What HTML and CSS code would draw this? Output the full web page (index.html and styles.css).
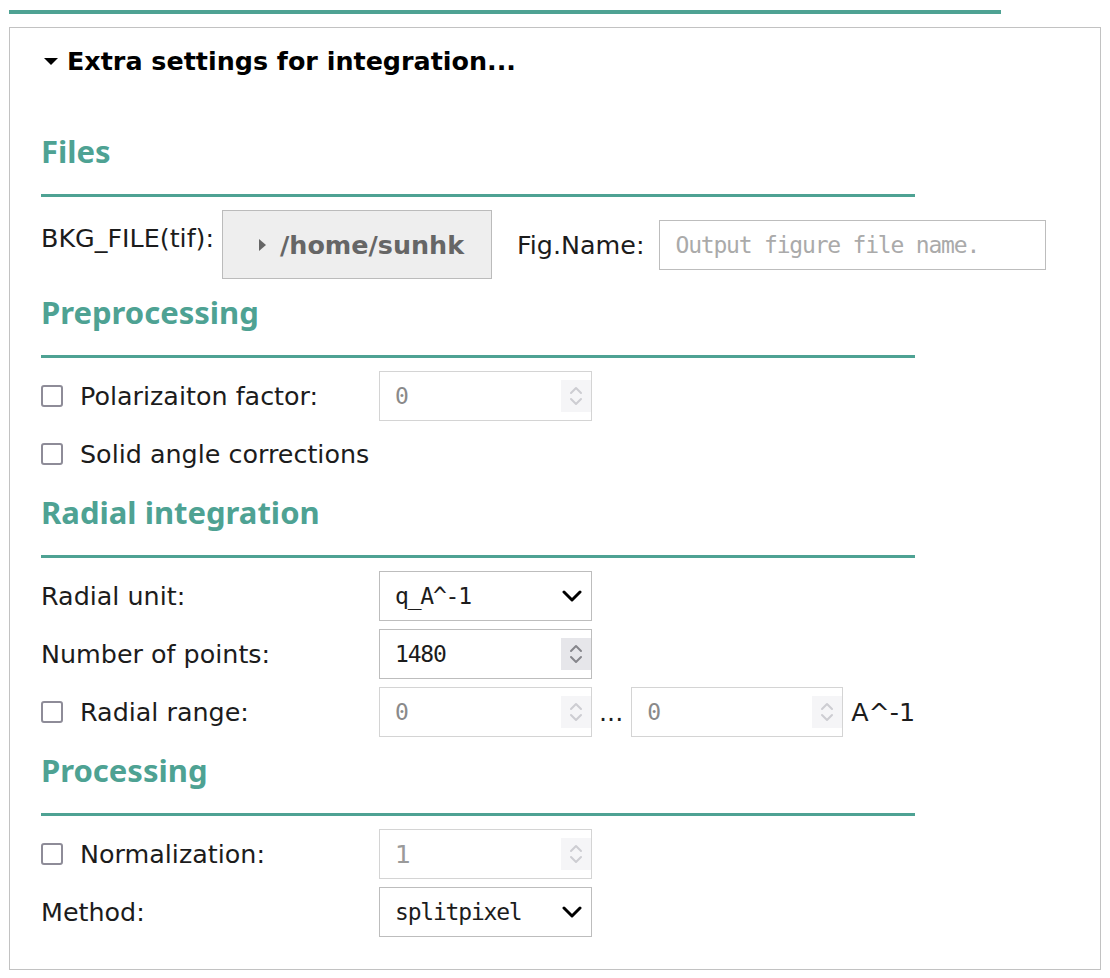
FILE: index.html
```html
<!DOCTYPE html>
<html lang="en">
<head>
<meta charset="utf-8">
<title>Extra settings for integration</title>
<link rel="stylesheet" href="styles.css">
</head>
<body>
<div class="page">
  <div class="top-line"></div>
  <details class="box" open>
    <summary class="sum"><span class="caret"></span>Extra settings for integration...</summary>
    <div class="content">
      <h3 class="sec">Files</h3>
      <div class="row-files">
        <span class="lab-top">BKG_FILE(tif):</span>
        <button class="file-btn" type="button"><span class="tri"></span>/home/sunhk</button>
        <label class="fig-lab" for="fig">Fig.Name:</label>
        <input id="fig" class="txt" type="text" placeholder="Output figure file name.">
      </div>

      <h3 class="sec">Preprocessing</h3>
      <div class="rows">
        <div class="row">
          <label class="lab"><input class="cb" type="checkbox">Polarizaiton factor:</label>
          <div class="num dis">
            <input type="text" value="0" disabled>
            <span class="spin"><svg viewBox="0 0 30 32" width="30" height="32"><polyline points="10,13 15,8 20,13"/><polyline points="10,19 15,24 20,19"/></svg></span>
          </div>
        </div>
        <div class="row">
          <label class="lab lab-wide"><input class="cb" type="checkbox">Solid angle corrections</label>
        </div>
      </div>

      <h3 class="sec">Radial integration</h3>
      <div class="rows">
        <div class="row">
          <span class="lab">Radial unit:</span>
          <div class="sel">
            <span class="sel-val">q_A^-1</span>
            <svg class="chev" viewBox="0 0 20 12" width="20" height="12"><polyline points="2,2 10,10 18,2"/></svg>
          </div>
        </div>
        <div class="row">
          <span class="lab">Number of points:</span>
          <div class="num">
            <input type="text" value="1480">
            <span class="spin"><svg viewBox="0 0 30 32" width="30" height="32"><polyline points="10,13 15,8 20,13"/><polyline points="10,19 15,24 20,19"/></svg></span>
          </div>
        </div>
        <div class="row">
          <label class="lab"><input class="cb" type="checkbox">Radial range:</label>
          <div class="num dis">
            <input type="text" value="0" disabled>
            <span class="spin"><svg viewBox="0 0 30 32" width="30" height="32"><polyline points="10,13 15,8 20,13"/><polyline points="10,19 15,24 20,19"/></svg></span>
          </div>
          <span class="dots">...</span>
          <div class="num dis num-b">
            <input type="text" value="0" disabled>
            <span class="spin"><svg viewBox="0 0 30 32" width="30" height="32"><polyline points="10,13 15,8 20,13"/><polyline points="10,19 15,24 20,19"/></svg></span>
          </div>
          <span class="unit">A^-1</span>
        </div>
      </div>

      <h3 class="sec">Processing</h3>
      <div class="rows">
        <div class="row">
          <label class="lab"><input class="cb" type="checkbox">Normalization:</label>
          <div class="num dis">
            <input class="sans" type="text" value="1" disabled>
            <span class="spin"><svg viewBox="0 0 30 32" width="30" height="32"><polyline points="10,13 15,8 20,13"/><polyline points="10,19 15,24 20,19"/></svg></span>
          </div>
        </div>
        <div class="row">
          <span class="lab">Method:</span>
          <div class="sel">
            <span class="sel-val">splitpixel</span>
            <svg class="chev" viewBox="0 0 20 12" width="20" height="12"><polyline points="2,2 10,10 18,2"/></svg>
          </div>
        </div>
      </div>
    </div>
  </details>
</div>
</body>
</html>
```

FILE: styles.css
```css
body {
  margin: 0;
  background: #fff;
  color: #1c1c1c;
  font-family: "DejaVu Sans", sans-serif;
  font-size: 25.4px;
}

.page {
  padding: 10px 0 0 9px;
}

.top-line {
  width: 992px;
  height: 4px;
  background: #4ea293;
  margin-bottom: 13px;
}

.box {
  width: 1092px;
  box-sizing: border-box;
  border: 1px solid #c2c2c2;
  padding: 18px 30px 32px 31px;
}

.sum {
  display: flex;
  align-items: center;
  height: 30px;
  line-height: 30px;
  list-style: none;
  font-weight: bold;
  color: #000;
  cursor: pointer;
}

.sum::-webkit-details-marker {
  display: none;
}

.caret {
  width: 0;
  height: 0;
  border-left: 7px solid transparent;
  border-right: 7px solid transparent;
  border-top: 7px solid #000;
  margin: 0 9px 0 3px;
}

.content {
  padding-top: 42px;
}

.sec {
  width: 874px;
  margin: 0 0 13px;
  padding: 14px 0 24px;
  line-height: 38px;
  font-family: "Noto Sans", sans-serif;
  font-size: 31px;
  font-weight: bold;
  color: #4ea293;
  border-bottom: 3px solid #4ea293;
}

.row-files {
  display: flex;
  align-items: center;
  height: 69px;
}

.lab-top {
  align-self: flex-start;
  line-height: 56px;
  margin-right: 8px;
  white-space: nowrap;
}

.file-btn {
  width: 270px;
  height: 69px;
  box-sizing: border-box;
  flex-shrink: 0;
  display: flex;
  align-items: center;
  gap: 14px;
  padding: 0 0 0 36px;
  margin: 0;
  background: #eeeeee;
  border: 1px solid #bbbbbb;
  border-radius: 0;
  font-family: "DejaVu Sans", sans-serif;
  font-size: 25.4px;
  font-weight: bold;
  color: #666;
}

.tri {
  width: 0;
  height: 0;
  border-top: 6px solid transparent;
  border-bottom: 6px solid transparent;
  border-left: 7px solid #666;
}

.fig-lab {
  margin: 0 14px 0 25px;
  white-space: nowrap;
}

.txt {
  width: 387px;
  height: 50px;
  box-sizing: border-box;
  flex-shrink: 0;
  margin: 0;
  border: 1px solid #bdbdbd;
  border-radius: 0;
  padding: 0 16px;
  outline: none;
  font-family: "DejaVu Sans Mono", monospace;
  font-size: 23px;
  letter-spacing: -1.2px;
  color: #1c1c1c;
}

.txt::placeholder {
  color: #aaaaaa;
}

.rows {
  display: flex;
  flex-direction: column;
  gap: 8px;
}

.row {
  display: flex;
  align-items: center;
  height: 50px;
}

.lab {
  width: 338px;
  flex-shrink: 0;
  display: flex;
  align-items: center;
  white-space: nowrap;
}

.lab-wide {
  width: auto;
}

.cb {
  appearance: none;
  -webkit-appearance: none;
  width: 22px;
  height: 22px;
  box-sizing: border-box;
  margin: 0 17px 0 0;
  border: 2px solid #8e8c98;
  border-radius: 3px;
  background: #fff;
}

.num,
.sel {
  width: 213px;
  height: 50px;
  box-sizing: border-box;
  flex-shrink: 0;
  display: flex;
  align-items: center;
  border: 1px solid #bdbdbd;
  background: #fff;
}

.num-b {
  width: 212px;
}

.num input {
  flex: 1;
  min-width: 0;
  height: 100%;
  margin: 0;
  padding: 0 0 0 15px;
  border: 0;
  outline: none;
  background: transparent;
  font-family: "DejaVu Sans Mono", monospace;
  font-size: 23px;
  letter-spacing: -1.2px;
  color: #1c1c1c;
}

.num input.sans {
  font-family: "DejaVu Sans", sans-serif;
  font-size: 25.4px;
  letter-spacing: 0;
}

.spin {
  width: 30px;
  height: 32px;
  flex-shrink: 0;
  background: #e6e6ea;
  display: flex;
}

.spin svg {
  fill: none;
  stroke: #86868c;
  stroke-width: 2;
  stroke-linecap: round;
  stroke-linejoin: round;
}

.num.dis {
  border-color: #d4d4d4;
}

.num.dis input {
  color: #8a8a8a;
  -webkit-text-fill-color: #8a8a8a;
}

.num.dis input.sans {
  color: #9a9a9a;
  -webkit-text-fill-color: #9a9a9a;
}

.num.dis .spin {
  background: #f5f5f7;
}

.num.dis .spin svg {
  stroke: #cdcdd2;
}

.sel-val {
  flex: 1;
  padding-left: 15px;
  font-family: "DejaVu Sans Mono", monospace;
  font-size: 23px;
  letter-spacing: -1.2px;
  color: #1c1c1c;
}

.chev {
  margin-right: 9px;
  fill: none;
  stroke: #000;
  stroke-width: 3;
  stroke-linecap: round;
  stroke-linejoin: round;
}

.dots {
  margin: 0 8px 0 7px;
}

.unit {
  margin-left: 8px;
  white-space: nowrap;
}
```
